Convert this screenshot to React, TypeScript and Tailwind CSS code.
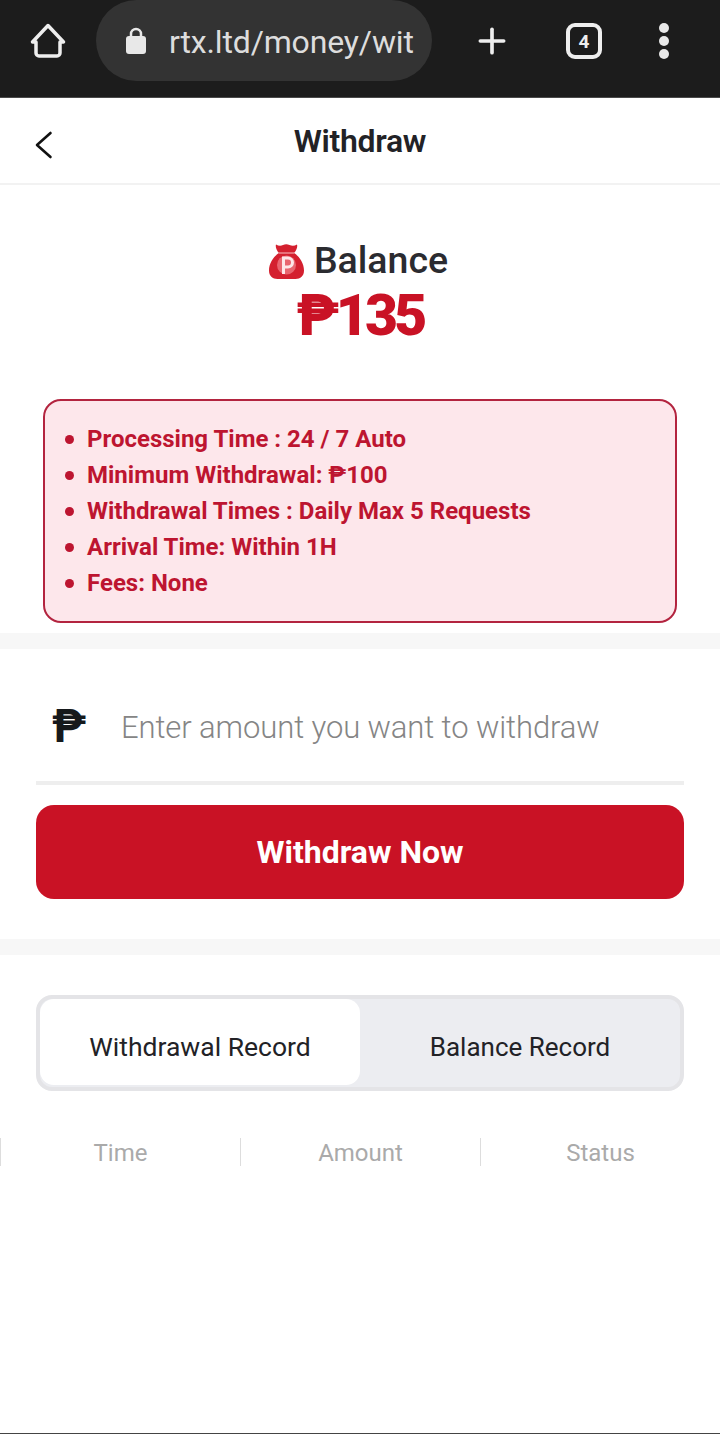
import { Plus } from "lucide-react"

const rules = [
  "Processing Time : 24 / 7 Auto",
  "Minimum Withdrawal: ₱100",
  "Withdrawal Times : Daily Max 5 Requests",
  "Arrival Time: Within 1H",
  "Fees: None",
]

function MoneyBag() {
  return (
    <svg width="35" height="36" viewBox="0 0 35 36" aria-hidden="true">
      <path
        d="M7 1.500c2.500 1.500 5 1.500 7 .5 2-1 4.500-1 6.500 0 2.500 1 5 1 7.500-.5.800 2-.5 6-3 8.500 5 3 10 10 10 17.500 0 5.500-3.500 8.500-8.500 8.500H8.500C3.500 36 0 33 0 27.500 0 20 5 13 10 10 7.500 7.500 6.200 3.500 7 1.500z"
        fill="#d4202f"
      />
      <path d="M10 10h15" stroke="#f3a5ab" strokeWidth="1.200" />
      <circle cx="17.500" cy="22" r="9.500" fill="#e8656f" />
      <path d="M14.500 31V15h4.500a4.500 4.500 0 0 1 0 9h-4.500" stroke="#fde6e8" strokeWidth="3" fill="none" />
    </svg>
  )
}

function HomeIcon() {
  return (
    <svg width="38" height="38" viewBox="0 0 38 38" fill="none" stroke="#eeeeee" strokeWidth="3.500" strokeLinejoin="round" aria-hidden="true">
      <path d="M7 20H3.500L19 3.500 34.500 20H31v11a3 3 0 0 1-3 3H10a3 3 0 0 1-3-3z" />
    </svg>
  )
}

function LockIcon() {
  return (
    <svg width="22" height="30" viewBox="0 0 22 30" aria-hidden="true">
      <path d="M6 13V8a5 5 0 0 1 10 0v5" fill="none" stroke="#e8e8e8" strokeWidth="2.500" />
      <rect x="1" y="10" width="20" height="18" rx="3" fill="#e8e8e8" />
    </svg>
  )
}

function BackIcon() {
  return (
    <svg width="18" height="28" viewBox="0 0 18 28" fill="none" stroke="#111111" strokeWidth="2.600" strokeLinecap="round" strokeLinejoin="round" className="absolute left-[35px] top-[33px]" aria-hidden="true">
      <path d="M15.500 2 2 14l13.500 12" />
    </svg>
  )
}

export default function App() {
  return (
    <div className="h-[1434px] flex flex-col bg-white font-['Roboto',sans-serif] overflow-hidden">
      {/* Browser bar */}
      <div className="h-[98px] shrink-0 bg-[#1c1c1c] border-b border-[#4a4a4a] flex items-start">
        <div className="w-[96px] h-[82px] flex items-center justify-center">
          <HomeIcon />
        </div>
        <div className="w-[336px] h-[81px] rounded-full bg-[#333333] flex items-center pl-[29px] gap-[22px]">
          <LockIcon />
          <span className="text-[#dddddd] text-[32px] leading-none tracking-[-0.15px] mt-[3px]">rtx.ltd/money/wit</span>
        </div>
        <div className="w-[120px] h-[82px] flex items-center justify-center">
          <Plus size={40} color="#eeeeee" strokeWidth={2.2} />
        </div>
        <div className="w-[64px] h-[82px] flex items-center justify-center">
          <div className="w-[36px] h-[36px] rounded-[9px] border-[4px] border-[#eeeeee] flex items-center justify-center text-[#eeeeee] text-[19px] font-bold leading-none">4</div>
        </div>
        <div className="flex-1 h-[82px] flex flex-col items-center justify-center gap-[3px] pr-[8px]">
          <span className="w-[10px] h-[10px] rounded-full bg-[#e8e8e8]" />
          <span className="w-[10px] h-[10px] rounded-full bg-[#e8e8e8]" />
          <span className="w-[10px] h-[10px] rounded-full bg-[#e8e8e8]" />
        </div>
      </div>

      {/* Header */}
      <div className="h-[87px] shrink-0 relative flex items-center justify-center border-b-2 border-[#f2f2f2]">
        <BackIcon />
        <span className="text-[#222226] text-[32px] font-semibold leading-none mt-[1px] tracking-[-0.3px]">Withdraw</span>
      </div>

      {/* Balance */}
      <div className="shrink-0 flex flex-col items-center pt-[56px]">
        <div className="flex items-center gap-[10px] h-[40px] pr-[3px]">
          <MoneyBag />
          <span className="text-[#2b2b30] text-[37.5px] font-medium leading-none">Balance</span>
        </div>
        <div className="text-[#c91225] text-[57px] font-black leading-none mt-[6px] tracking-[-3.800px]">₱135</div>
      </div>

      {/* Notice */}
      <div className="mx-[43px] mt-[55px] h-[224px] shrink-0 rounded-[18px] border-2 border-[#b3243f] bg-[#fde7eb] pt-[20px] pl-[20px]">
        <ul className="flex flex-col">
          {rules.map((r) => (
            <li key={r} className="flex items-center gap-[13px] h-[36px] text-[#bd1530] text-[24px] font-bold leading-none">
              <span className="w-[9px] h-[9px] rounded-full bg-[#bd1530]" />
              {r}
            </li>
          ))}
        </ul>
      </div>

      <div className="h-[16px] mt-[10px] shrink-0 bg-[#f7f7f7]" />

      {/* Amount */}
      <div className="px-[36px] shrink-0">
        <div className="h-[136px] pt-[30px] flex items-center border-b-4 border-[#eeeeee]">
          <span className="w-[85px] pl-[16px] text-[#16191c] text-[46px] font-bold leading-none -mt-[8px]">₱</span>
          <span className="text-[#858585] text-[31px] tracking-[-0.1px] font-light leading-none -mt-[6px]">Enter amount you want to withdraw</span>
        </div>
        <button className="mt-[20px] w-full h-[94px] rounded-[18px] bg-[#c91225] text-white text-[32px] font-bold">
          Withdraw Now
        </button>
      </div>

      <div className="h-[16px] mt-[40px] shrink-0 bg-[#f7f7f7]" />

      {/* Tabs */}
      <div className="mx-[36px] mt-[40px] h-[96px] shrink-0 rounded-[16px] border-4 border-[#e4e4e7] bg-[#ecedf1] flex">
        <div className="w-[320px] h-[86px] pt-[10px] rounded-[14px] bg-white flex items-center justify-center text-[#222226] text-[26.500px] leading-none">
          Withdrawal Record
        </div>
        <div className="flex-1 pt-[10px] h-[86px] flex items-center justify-center text-[#222226] text-[26px] leading-none">
          Balance Record
        </div>
      </div>

      {/* Record table head */}
      <div className="grid grid-cols-3 mt-[47px] shrink-0">
        {["Time", "Amount", "Status"].map((h) => (
          <div key={h} className="h-[28px] pt-[2px] border-l border-[#dddddd] flex items-center justify-center text-[#aaaaaa] text-[24px] leading-none">
            {h}
          </div>
        ))}
      </div>

      <div className="flex-1" />
      <div className="h-[1px] shrink-0 bg-[#444444]" />
    </div>
  )
}
